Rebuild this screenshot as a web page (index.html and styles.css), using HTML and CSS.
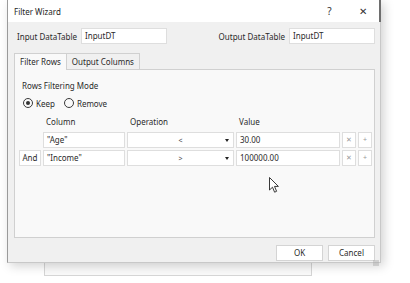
FILE: index.html
```html
<!DOCTYPE html>
<html lang="en">
<head>
    <meta charset="UTF-8">
    <title>Filter Wizard</title>
    <link rel="stylesheet" href="styles.css">
</head>
<body>
    <div class="desktop">
        <!-- window behind the dialog -->
        <div class="back-window"></div>

        <div class="dialog">
            <div class="title-bar">
                <span class="title">Filter Wizard</span>
                <span class="title-btn help">?</span>
                <span class="title-btn close">&#x2715;</span>
            </div>

            <div class="dialog-body">
                <div class="table-row">
                    <div class="field">
                        <label>Input DataTable</label>
                        <div class="textbox table-box">InputDT</div>
                    </div>
                    <div class="field">
                        <label>Output DataTable</label>
                        <div class="textbox table-box">InputDT</div>
                    </div>
                </div>

                <div class="tabs">
                    <div class="tab active">Filter Rows</div>
                    <div class="tab">Output Columns</div>
                </div>

                <div class="tab-panel">
                    <div class="section-title">Rows Filtering Mode</div>
                    <div class="radios">
                        <span class="radio checked"></span><span class="radio-label">Keep</span>
                        <span class="radio"></span><span class="radio-label">Remove</span>
                    </div>

                    <div class="filter-grid">
                        <div></div>
                        <div class="col-head">Column</div>
                        <div class="col-head">Operation</div>
                        <div class="col-head">Value</div>
                        <div></div>
                        <div></div>

                        <div></div>
                        <div class="textbox">"Age"</div>
                        <div class="select"><span class="op">&lt;</span><span class="arrow"></span></div>
                        <div class="textbox">30.00</div>
                        <div class="mini-btn">&#x2715;</div>
                        <div class="mini-btn">+</div>

                        <div class="and-box">And</div>
                        <div class="textbox">"Income"</div>
                        <div class="select"><span class="op">&gt;</span><span class="arrow"></span></div>
                        <div class="textbox">100000.00</div>
                        <div class="mini-btn">&#x2715;</div>
                        <div class="mini-btn">+</div>
                    </div>

                    <svg class="cursor" width="12" height="17" viewBox="0 0 12 17">
                        <path d="M0.5 0.5 L0.5 13 L3.5 10.2 L5.6 15.2 L7.6 14.3 L5.5 9.4 L9.4 9.4 Z" fill="#fff" stroke="#222" stroke-width="0.9" stroke-linejoin="round"/>
                    </svg>
                </div>

                <div class="footer">
                    <div class="btn">OK</div>
                    <div class="btn">Cancel</div>
                    <span class="grip"></span>
                </div>
            </div>
        </div>
    </div>
</body>
</html>
```

FILE: styles.css
```css
body {
    margin: 0;
    background-color: #fff;
    font-family: 'Noto Sans', 'Open Sans', sans-serif;
    font-size: 8px;
    color: #2a2a2a;
}
.desktop {
    position: relative;
    width: 410px;
    height: 283px;
    overflow: hidden;
}
.back-window {
    position: absolute;
    left: 44px;
    top: 250px;
    width: 266px;
    height: 24px;
    background-color: #fafafa;
    border: 1px solid #d6d6d6;
}
.dialog {
    position: relative;
    margin-left: 7px;
    width: 374px;
    height: 263px;
    background-color: #f0f0f0;
    border-left: 1px solid #9a9a9a;
    border-right: 1px solid #c8c8c8;
    border-bottom: 1px solid #c8c8c8;
    box-shadow: 3px 3px 10px rgba(0, 0, 0, 0.18);
    display: flex;
    flex-direction: column;
    box-sizing: border-box;
}
.title-bar {
    flex-shrink: 0;
    height: 22px;
    background-color: #fff;
    display: flex;
    align-items: center;
    padding-left: 6px;
    border-right: 2px solid #6e6e6e;
    margin-right: -1px;
}
.title {
    flex: 1;
    color: #1e1e1e;
}
.title-btn {
    width: 33px;
    text-align: center;
    font-size: 10px;
    color: #333;
}
.dialog-body {
    flex: 1;
    display: flex;
    flex-direction: column;
    padding: 6px 5px 0 5px;
}
.table-row {
    display: flex;
    justify-content: space-between;
    padding-left: 4px;
}
.field {
    display: flex;
    align-items: center;
    gap: 4px;
}
.textbox {
    height: 14px;
    line-height: 14px;
    background-color: #fff;
    border: 1px solid #dedede;
    padding-left: 3px;
    white-space: nowrap;
}
.table-box {
    width: 81px;
    height: 14px;
    line-height: 14px;
}
.tabs {
    display: flex;
    margin-top: 9px;
    padding-left: 1px;
}
.tab {
    height: 15px;
    line-height: 15px;
    padding: 0 5px;
    border: 1px solid #d0d0d0;
    border-bottom: none;
    background-color: #f0f0f0;
}
.tab.active {
    background-color: #f9f9f9;
    margin-right: -1px;
    position: relative;
    z-index: 1;
    height: 16px;
    margin-bottom: -1px;
}
.tab-panel {
    position: relative;
    flex-shrink: 0;
    height: 157px;
    margin-left: 1px;
    background-color: #f9f9f9;
    border: 1px solid #d0d0d0;
    padding: 10px 0 0 7px;
}
.section-title {
    height: 12px;
    line-height: 12px;
}
.radios {
    display: flex;
    align-items: center;
    margin-top: 5px;
    margin-left: 1px;
    height: 12px;
}
.radio {
    width: 8px;
    height: 8px;
    border: 1px solid #3a3a3a;
    border-radius: 50%;
    position: relative;
}
.radio.checked::after {
    content: "";
    position: absolute;
    left: 2px;
    top: 2px;
    width: 4px;
    height: 4px;
    border-radius: 50%;
    background-color: #333;
}
.radio-label {
    margin-left: 3px;
    margin-right: 9px;
}
.filter-grid {
    display: grid;
    grid-template-columns: 22px 82px 107px 104px 14px 14px;
    grid-template-rows: 15px 16px 16px;
    column-gap: 2px;
    row-gap: 2px;
    margin-top: 6px;
    margin-left: -3px;
}
.col-head {
    padding-left: 3px;
    line-height: 14px;
}
.select {
    background-color: #fff;
    border: 1px solid #dedede;
    display: flex;
    align-items: center;
    justify-content: center;
    position: relative;
    color: #555;
    font-size: 7px;
}
.arrow {
    position: absolute;
    right: 4px;
    top: 6px;
    border-left: 2.5px solid transparent;
    border-right: 2.5px solid transparent;
    border-top: 3px solid #222;
}
.mini-btn {
    background-color: #fff;
    border: 1px solid #dedede;
    color: #999;
    text-align: center;
    line-height: 14px;
    font-size: 7px;
}
.and-box {
    background-color: #fff;
    border: 1px solid #dedede;
    text-align: center;
    line-height: 14px;
}
.cursor {
    position: absolute;
    left: 254px;
    top: 107px;
}
.footer {
    position: relative;
    display: flex;
    justify-content: flex-end;
    gap: 5px;
    margin-top: 7px;
}
.btn {
    width: 45px;
    height: 14px;
    line-height: 14px;
    background-color: #fff;
    border: 1px solid #d4d4d4;
    text-align: center;
}
.grip {
    position: absolute;
    right: -4px;
    bottom: -5px;
    width: 6px;
    height: 6px;
    background-image: radial-gradient(circle, #aaa 0.6px, transparent 0.8px);
    background-size: 2px 2px;
}
```
